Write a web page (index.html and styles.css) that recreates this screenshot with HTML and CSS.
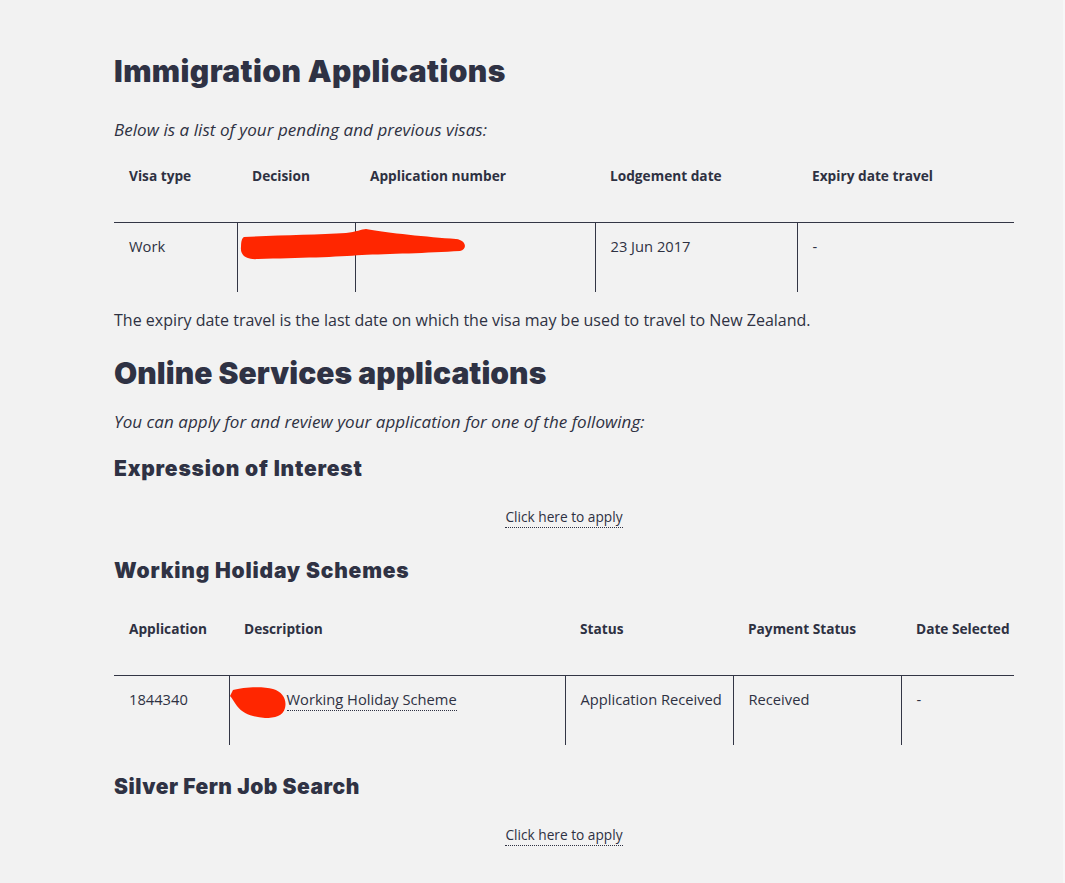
FILE: index.html
```html
<!DOCTYPE html>
<html lang="en">
<head>
<meta charset="utf-8">
<title>Immigration Applications</title>
<link rel="stylesheet" href="styles.css">
</head>
<body>
<main class="page">
  <h1 class="title title-first">Immigration Applications</h1>
  <p class="intro intro-first">Below is a list of your pending and previous visas:</p>

  <div class="table-wrap">
    <table class="grid visas">
      <colgroup>
        <col style="width:123px"><col style="width:118px"><col style="width:240px"><col style="width:202px"><col style="width:217px">
      </colgroup>
      <thead>
        <tr><th>Visa type</th><th>Decision</th><th>Application number</th><th>Lodgement date</th><th>Expiry date travel</th></tr>
      </thead>
      <tbody>
        <tr><td>Work</td><td></td><td></td><td>23 Jun 2017</td><td>-</td></tr>
      </tbody>
    </table>
    <svg class="scribble scribble-one" width="232" height="40" viewBox="0 0 232 40" aria-hidden="true">
      <path d="M6 10 C40 8 80 8 108 6 C118 5 124 2 128 2 C150 6 190 10 218 12 C228 13 230 22 222 24 C190 26 150 27 124 28 C100 30 60 31 20 32 C8 33 2 28 3 20 C3 14 4 11 6 10 Z" fill="#ff2600"/>
    </svg>
  </div>

  <p class="note">The expiry date travel is the last date on which the visa may be used to travel to New Zealand.</p>

  <h1 class="title title-second">Online Services applications</h1>
  <p class="intro intro-second">You can apply for and review your application for one of the following:</p>

  <h3 class="sub sub-eoi">Expression of Interest</h3>
  <div class="apply"><a class="dotted" href="#">Click here to apply</a></div>

  <h3 class="sub sub-whs">Working Holiday Schemes</h3>
  <div class="table-wrap">
    <table class="grid schemes">
      <colgroup>
        <col style="width:115px"><col style="width:336px"><col style="width:168px"><col style="width:168px"><col style="width:113px">
      </colgroup>
      <thead>
        <tr><th>Application</th><th>Description</th><th>Status</th><th>Payment Status</th><th>Date Selected</th></tr>
      </thead>
      <tbody>
        <tr><td>1844340</td><td class="desc"><a class="dotted" href="#">Working Holiday Scheme</a></td><td>Application Received</td><td>Received</td><td>-</td></tr>
      </tbody>
    </table>
    <svg class="scribble scribble-two" width="60" height="36" viewBox="0 0 60 36" aria-hidden="true">
      <path d="M4 4 C14 1 34 0 44 3 C54 6 58 14 56 22 C54 30 46 32 36 32 C24 31 14 28 8 20 C5 16 3 12 1 10 C2 8 3 6 4 4 Z" fill="#ff2600"/>
    </svg>
  </div>

  <h3 class="sub sub-sfj">Silver Fern Job Search</h3>
  <div class="apply"><a class="dotted" href="#">Click here to apply</a></div>
</main>
</body>
</html>
```

FILE: styles.css
```css
html {
  background: linear-gradient(to right, #f2f2f2 1063px, #f7f7f7 1063px);
}
body {
  margin: 0;
  color: #2e3142;
  font-family: "Open Sans", "Liberation Sans", sans-serif;
  font-size: 16px;
  line-height: 20px;
}
.page {
  width: 900px;
  padding: 53px 0 40px 114px;
}
.title {
  margin: 0;
  font-family: Inter, "Liberation Sans", sans-serif;
  font-weight: 900;
  font-size: 30px;
  line-height: 36px;
  letter-spacing: 0.4px;
  color: #2f3244;
}
.title-second { letter-spacing: 0.05px; }
.intro {
  margin: 0;
  font-style: italic;
  font-size: 17px;
  line-height: 24px;
  letter-spacing: 0.05px;
}
.intro-first { margin-top: 29px; }
.title-second { margin-top: 25px; }
.intro-second { margin-top: 19px; }
.sub {
  margin: 0;
  font-family: Inter, "Liberation Sans", sans-serif;
  font-weight: 900;
  font-size: 21px;
  line-height: 26px;
  letter-spacing: 0.8px;
  color: #2f3244;
}
.sub-sfj { letter-spacing: 0.5px; }
.sub-eoi { margin-top: 22px; }
.sub-whs { margin-top: 31px; }
.sub-sfj { margin-top: 29px; }
.apply {
  margin-top: 25px;
  text-align: center;
  font-size: 13.7px;
}
.dotted {
  color: #2e3142;
  text-decoration: none;
  border-bottom: 1px dotted #2e3142;
  padding-bottom: 1px;
}
.table-wrap {
  position: relative;
  margin-top: 9px;
}
.sub-whs + .table-wrap { margin-top: 20px; }
.grid {
  width: 900px;
  border-collapse: collapse;
  table-layout: fixed;
  font-size: 14.7px;
}
.grid th {
  text-align: left;
  font-weight: 700;
  font-size: 13.7px;
  padding: 15px 15px 36px;
  line-height: 20px;
  vertical-align: top;
  white-space: nowrap;
  overflow: visible;
}
.grid td {
  padding: 13px 15px 36px;
  line-height: 20px;
  vertical-align: top;
  border-top: 1px solid #333645;
  border-left: 1px solid #333645;
  white-space: nowrap;
}
.grid td:first-child { border-left: none; }
.grid td.desc { padding-left: 57px; }
.note {
  margin: 18px 0 0;
}
.scribble {
  position: absolute;
  pointer-events: none;
}
.scribble-one { left: 124px; top: 76px; }
.scribble-two { left: 115px; top: 82px; }
```
